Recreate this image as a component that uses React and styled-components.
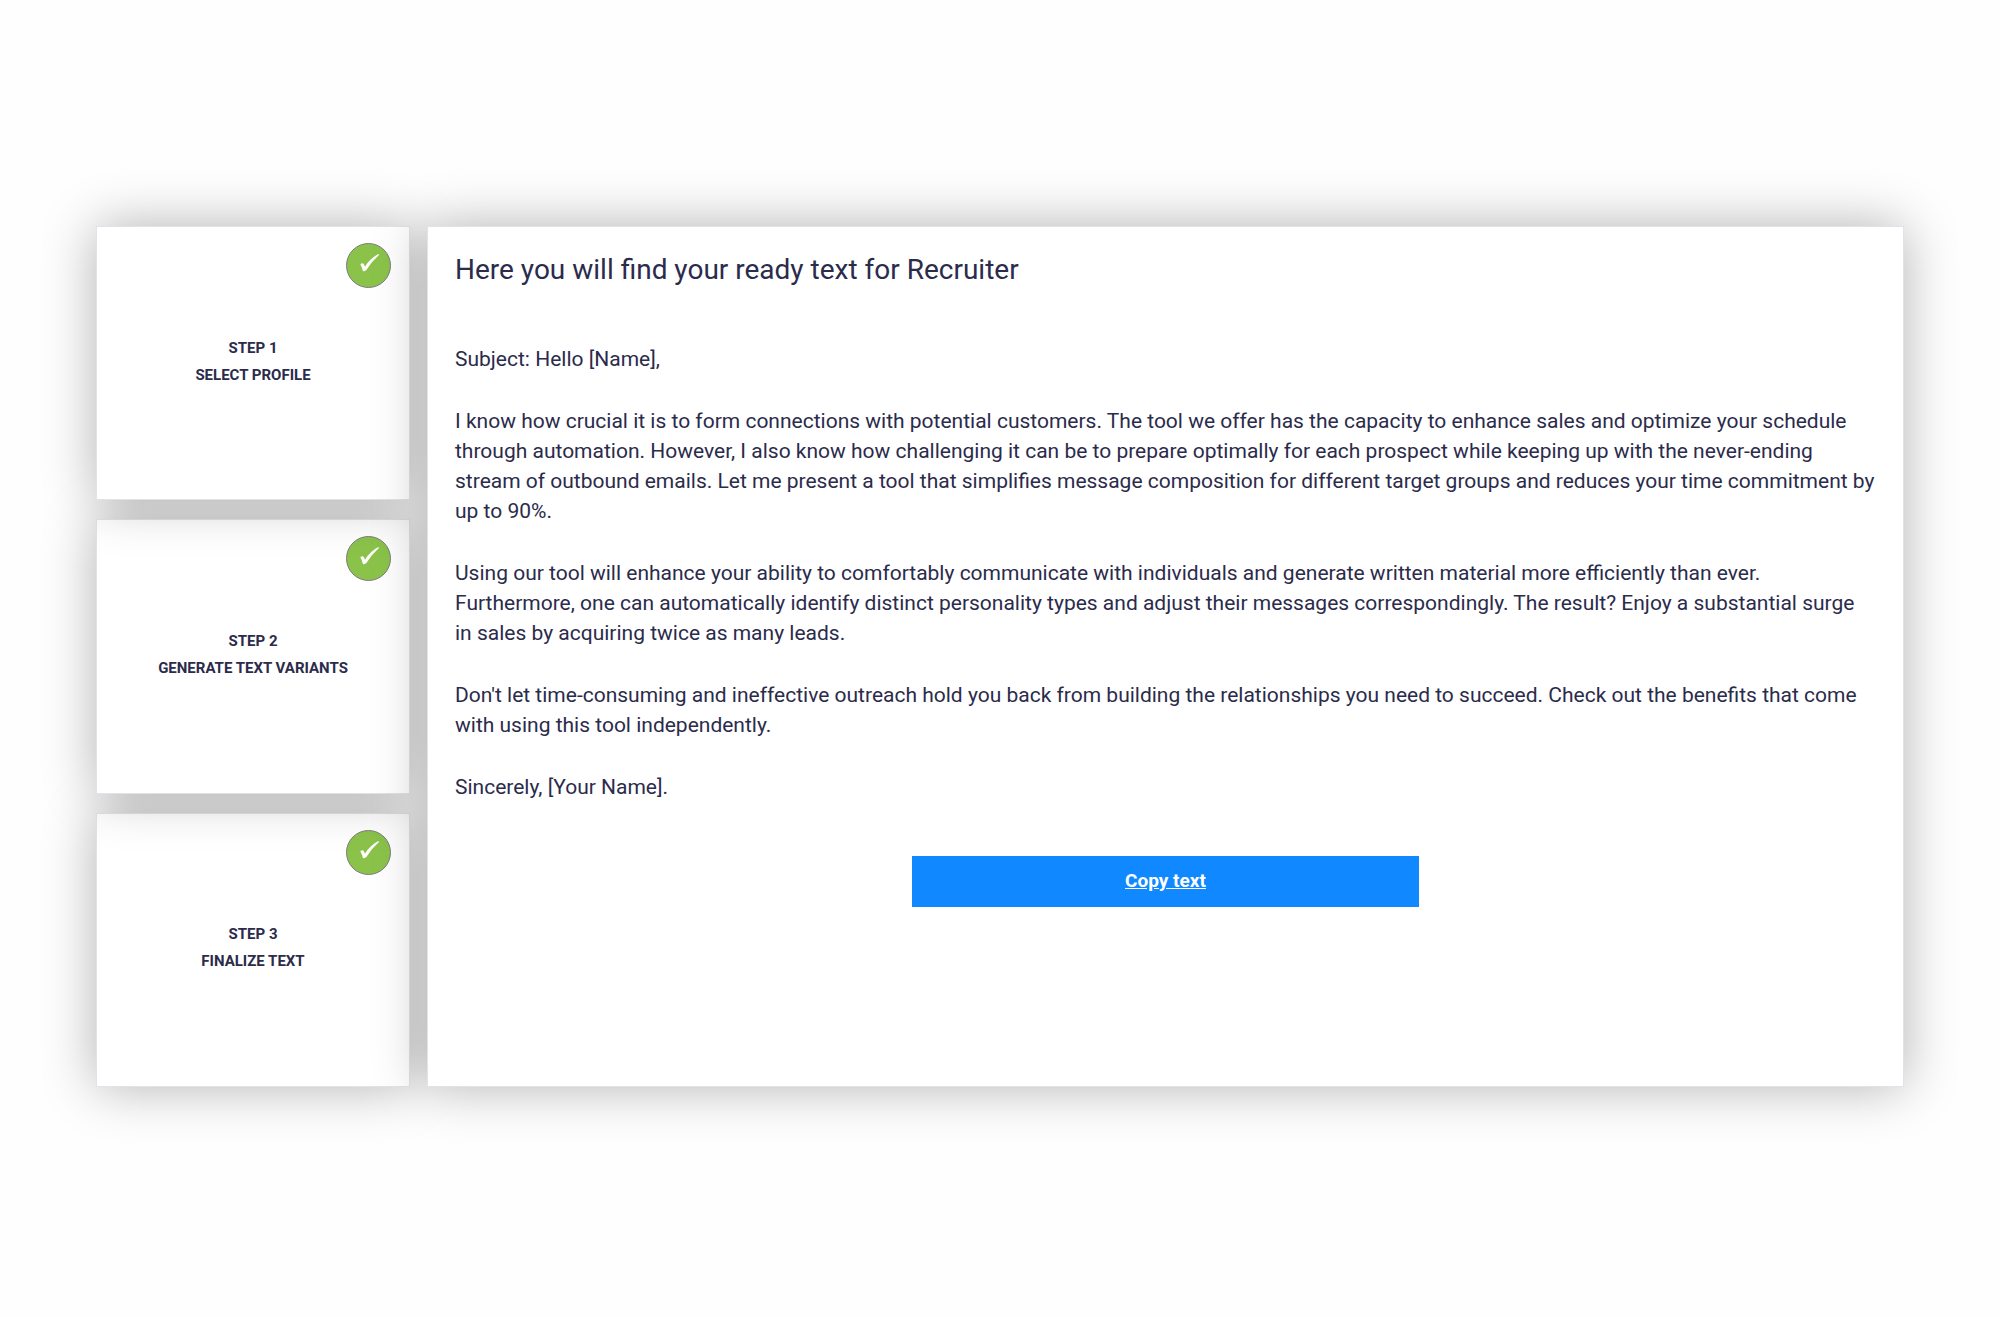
import React from 'react';
import styled, { createGlobalStyle } from 'styled-components';

const steps = [
    { id: 1, label: 'Select profile' },
    { id: 2, label: 'Generate text variants' },
    { id: 3, label: 'Finalize text' },
];

const message = [
    'Subject: Hello [Name],',
    'I know how crucial it is to form connections with potential customers. The tool we offer has the capacity to enhance sales and optimize your schedule through automation. However, I also know how challenging it can be to prepare optimally for each prospect while keeping up with the never-ending stream of outbound emails. Let me present a tool that simplifies message composition for different target groups and reduces your time commitment by up to 90%.',
    'Using our tool will enhance your ability to comfortably communicate with individuals and generate written material more efficiently than ever. Furthermore, one can automatically identify distinct personality types and adjust their messages correspondingly. The result? Enjoy a substantial surge in sales by acquiring twice as many leads.',
    "Don't let time-consuming and ineffective outreach hold you back from building the relationships you need to succeed. Check out the benefits that come with using this tool independently.",
    'Sincerely, [Your Name].',
];

const DoneBadge = () => (
    <Badge viewBox="0 0 135 135" role="img" aria-label="Done">
        <circle cx="67.5" cy="67.5" r="66" fill="#8bc34a" stroke="#7d7d7d" strokeWidth="3" />
        <path d="M43 64 Q48 58 53 62 L57 71 Q72 46 97 33 L99 36 Q77 55 61 81 Q57 85 51 85 Q48 73 43 64 Z" fill="#fff" />
    </Badge>
)

const App = () => {

    const copyText = () => navigator.clipboard?.writeText(message.join('\n\n'));

    return (
        <Page>
            <GlobalStyle />
            <Steps>
                {steps.map((step, index) => (
                    <Step key={step.id} $level={steps.length - index}>
                        <DoneBadge />
                        <span>Step {step.id}</span>
                        <span>{step.label}</span>
                    </Step>
                ))}
            </Steps>
            <Result>
                <h1>Here you will find your ready text for Recruiter</h1>
                <Message>
                    {message.map((paragraph) => (
                        <p key={paragraph}>{paragraph}</p>
                    ))}
                </Message>
                <CopyButton type="button" onClick={copyText}>Copy text</CopyButton>
            </Result>
        </Page>
    )
}


const GlobalStyle = createGlobalStyle`
    * {
        box-sizing: border-box;
    }
    body {
        margin: 0;
        background: #fefefe;
        color: #2b2b4b;
        font-family: Roboto, "Liberation Sans", sans-serif;
    }
`;

const Page = styled.main`
    display: grid;
    grid-template-columns: 314px 1fr;
    gap: 17px;
    padding: 226px 96px;
`;

const Steps = styled.ol`
    display: flex;
    flex-direction: column;
    gap: 19px;
    margin: 0;
    padding: 0;
    list-style: none;
`;

/* earlier steps cast their shadow on the later ones */
const Step = styled.li`
    position: relative;
    z-index: ${({ $level }) => $level};
    flex: 1;
    display: flex;
    flex-direction: column;
    align-items: center;
    justify-content: center;
    padding-bottom: 3px;
    background: #fff;
    border: 1px solid #e2e2ea;
    box-shadow: 0 0 50px rgba(0, 0, 0, .3);
    font-size: 15px;
    font-weight: 700;
    line-height: 27px;
    text-transform: uppercase;
`;

const Badge = styled.svg`
    position: absolute;
    top: 16px;
    right: 18px;
    width: 45px;
    height: 45px;
`;

const Result = styled.section`
    position: relative;
    z-index: 4;
    display: flex;
    flex-direction: column;
    align-items: center;
    min-height: 861px;
    padding: 25px 27px;
    background: #fff;
    border: 1px solid #e2e2ea;
    box-shadow: 0 0 50px rgba(0, 0, 0, .3);

    h1{
        align-self: stretch;
        margin: 0 0 56px;
        font-size: 28px;
        font-weight: 400;
        line-height: 36px;
    }
`;

const Message = styled.div`
    align-self: stretch;
    display: flex;
    flex-direction: column;
    gap: 32px;
    margin-bottom: 54px;
    font-size: 21px;
    line-height: 30px;

    p{
        margin: 0;
    }
`;

const CopyButton = styled.button`
    width: 507px;
    max-width: 100%;
    height: 51px;
    padding: 0 0 3px;
    background: #1088ff;
    border: none;
    color: #fff;
    font-family: inherit;
    font-size: 19px;
    font-weight: 700;
    text-decoration: underline;
    cursor: pointer;
`;


export default App
